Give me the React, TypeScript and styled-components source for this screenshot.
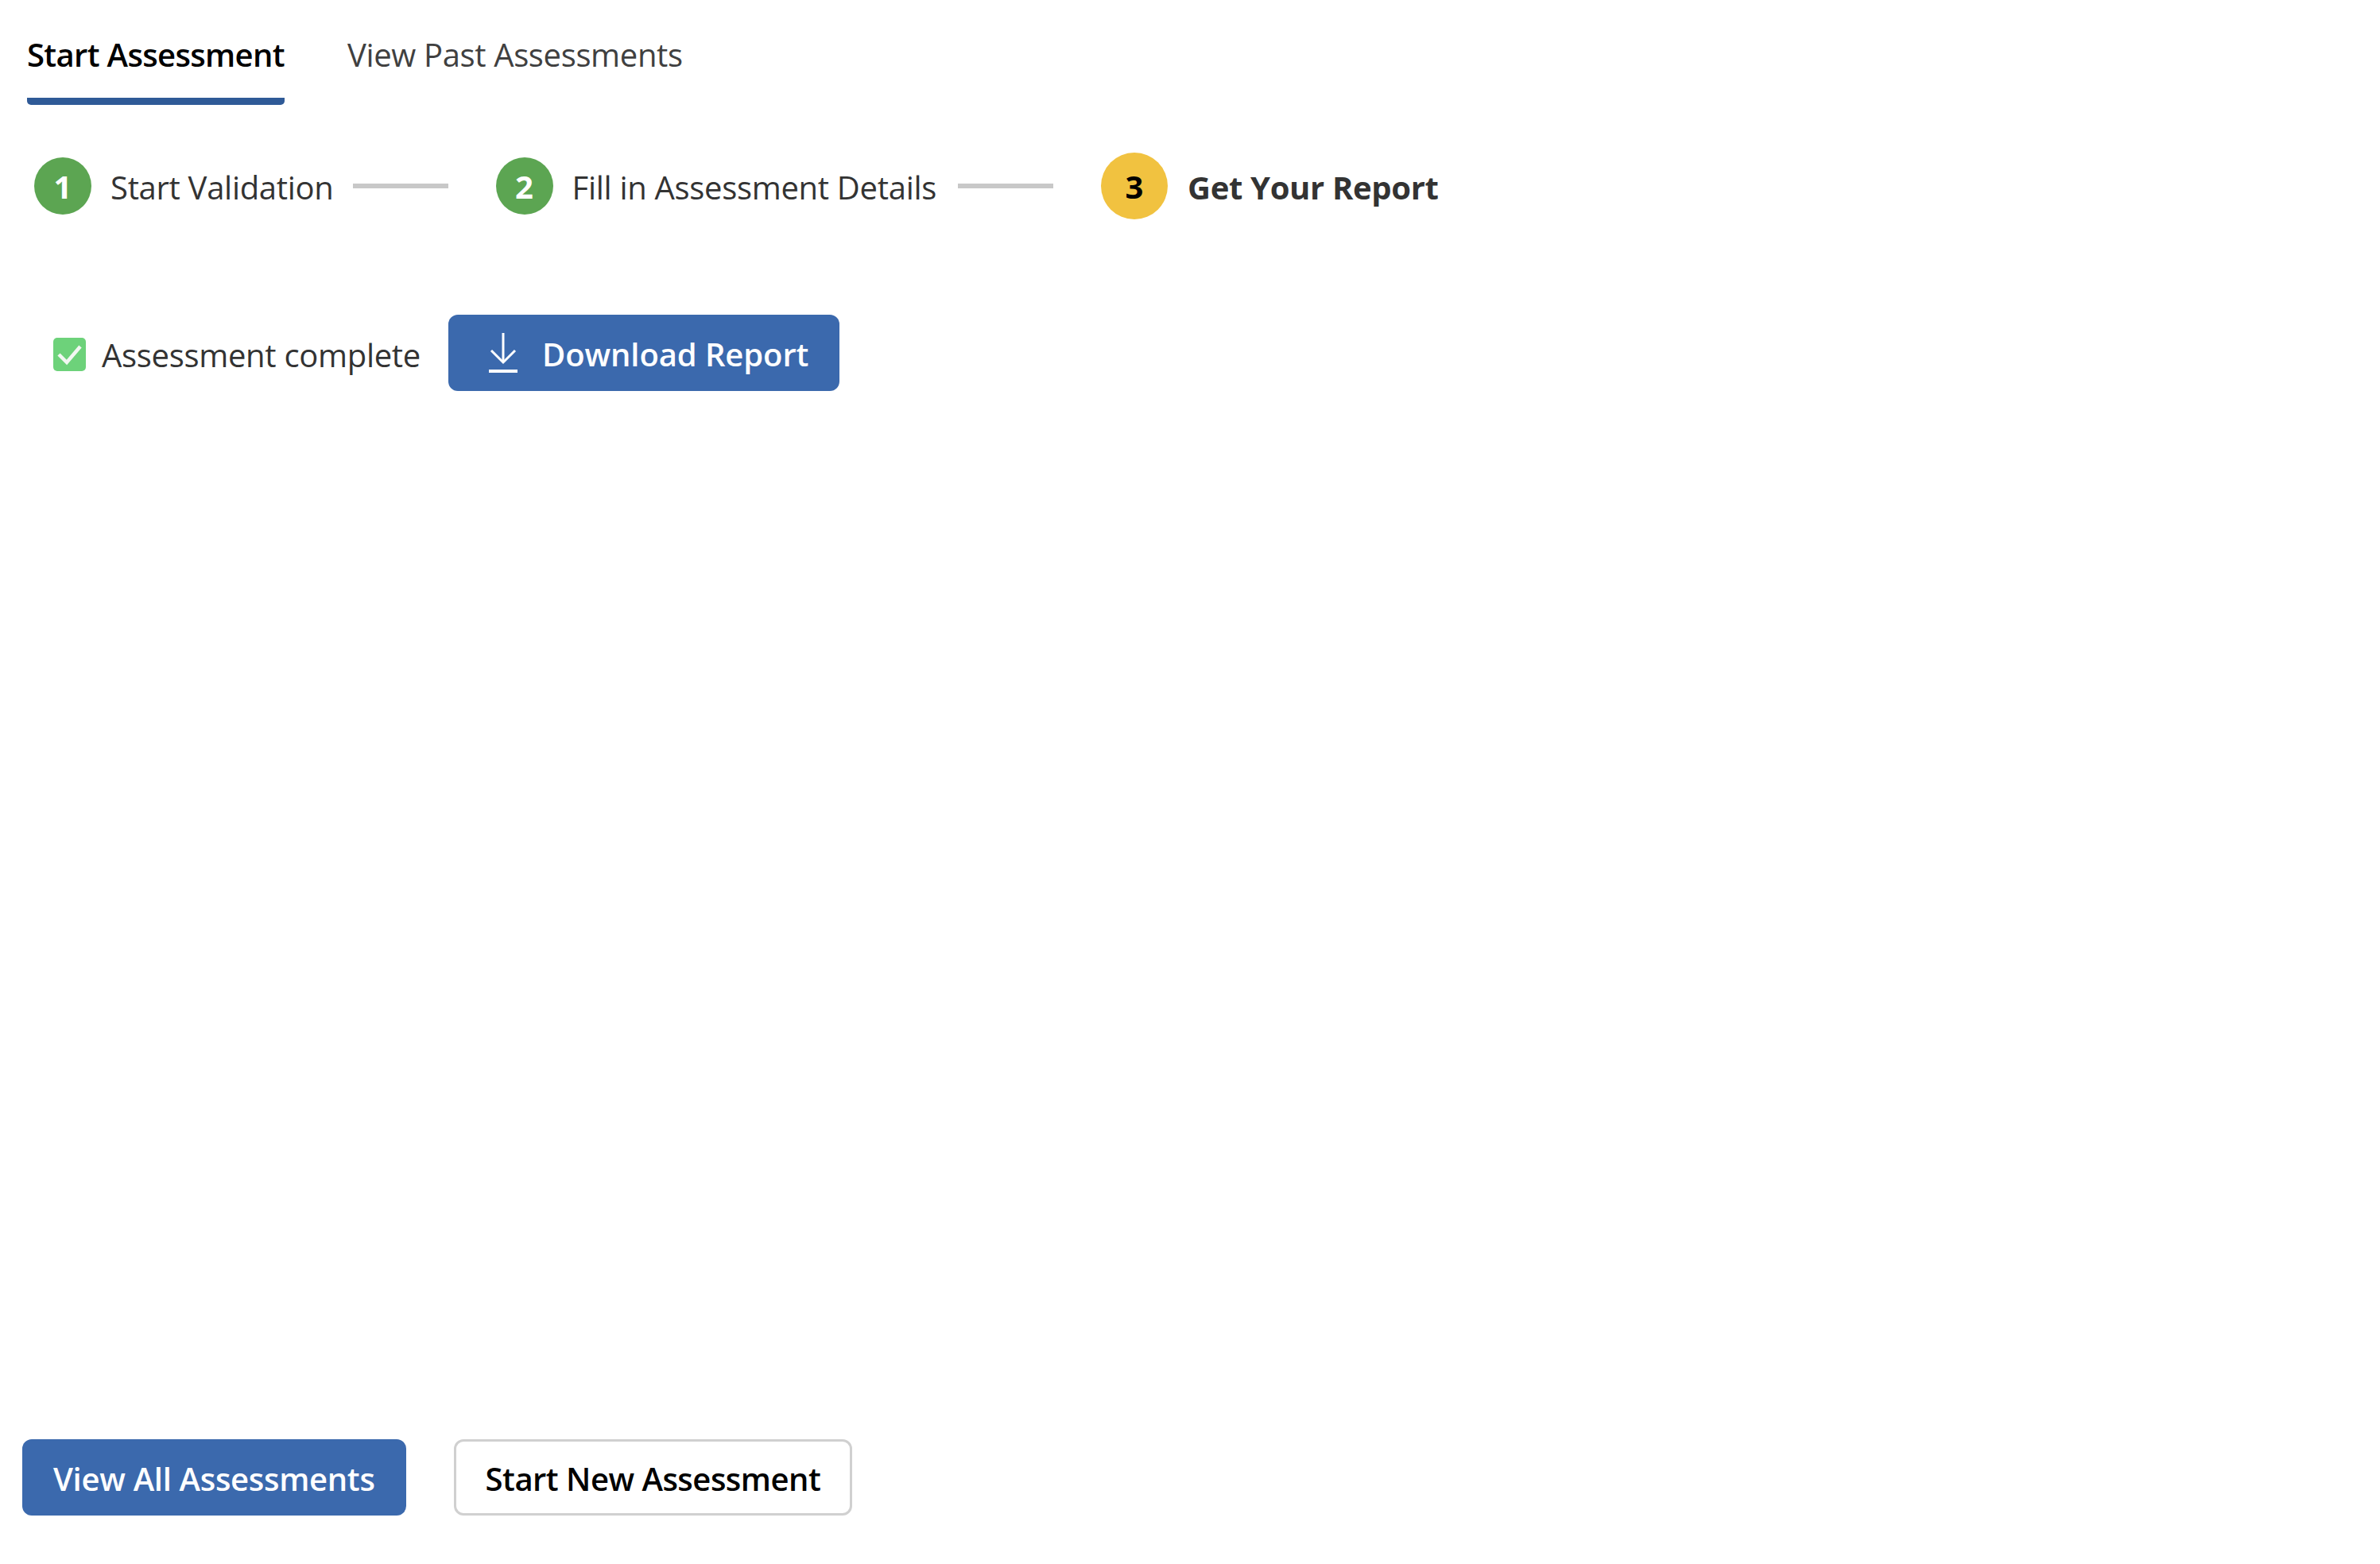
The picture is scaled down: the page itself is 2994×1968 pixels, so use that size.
import React from "react";
import styled, { createGlobalStyle } from "styled-components";

const Global = createGlobalStyle`
  html, body { margin: 0; padding: 0; background: #fff; }
  body { font-family: "Open Sans", "Noto Sans", sans-serif; }
`;

const Page = styled.div`
  display: flex;
  flex-direction: column;
  height: 1968px;
  box-sizing: border-box;
  padding: 0 0 61px 0;
`;

const Tabs = styled.div`
  display: flex;
  gap: 79px;
  padding-left: 34px;
  height: 132px;
`;

const Tab = styled.div<{ $active?: boolean }>`
  box-sizing: border-box;
  height: 132px;
  padding-top: 42px;
  font-size: 40px;
  line-height: 54px;
  font-weight: ${(p) => (p.$active ? 600 : 400)};
  letter-spacing: ${(p) => (p.$active ? "-0.65px" : "-0.35px")};
  color: ${(p) => (p.$active ? "#000" : "#404040")};
  border-bottom: 9px solid ${(p) => (p.$active ? "#2f5a97" : "transparent")};
  border-radius: 5px;
`;

const Stepper = styled.div`
  display: flex;
  align-items: center;
  height: 84px;
  margin-top: 60px;
  padding-left: 43px;
`;

const Circle = styled.div<{ $current?: boolean }>`
  width: ${(p) => (p.$current ? 84 : 72)}px;
  height: ${(p) => (p.$current ? 84 : 72)}px;
  border-radius: 50%;
  flex: none;
  display: flex;
  align-items: center;
  justify-content: center;
  font-size: 40px;
  font-weight: 700;
  color: ${(p) => (p.$current ? "#000" : "#fff")};
  background: ${(p) => (p.$current ? "#f1c240" : "#5ca552")};
`;

const StepLabel = styled.div<{ $current?: boolean }>`
  font-size: 40px;
  line-height: 54px;
  padding-top: 4px;
  margin-left: ${(p) => (p.$current ? 25 : 24)}px;
  letter-spacing: ${(p) => (p.$current ? "-0.33px" : "-0.3px")};
  font-weight: ${(p) => (p.$current ? 700 : 400)};
  color: #333;
  white-space: nowrap;
`;

const Connector = styled.div<{ $lead: number }>`
  width: 120px;
  height: 6px;
  flex: none;
  margin: 0 60px 0 ${(p) => p.$lead}px;
  background: #c8c8c8;
`;

const Status = styled.div`
  display: flex;
  align-items: center;
  margin-top: 120px;
  padding-left: 67px;
`;

const Check = styled.div`
  width: 41px;
  height: 42px;
  margin-top: 3px;
  border-radius: 5px;
  background: #6dd27a;
  display: flex;
  align-items: center;
  justify-content: center;
`;

const StatusText = styled.div`
  margin-left: 20px;
  padding-top: 5px;
  font-size: 40px;
  line-height: 54px;
  letter-spacing: -0.3px;
  color: #333;
`;

const Button = styled.button<{ $outline?: boolean }>`
  box-sizing: border-box;
  height: 96px;
  display: inline-flex;
  align-items: center;
  justify-content: center;
  padding: 3px ${(p) => (p.$outline ? 37 : 39)}px 0;
  border-radius: 12px;
  font-family: inherit;
  font-size: 40px;
  font-weight: 600;
  letter-spacing: ${(p) => (p.$outline ? "-0.5px" : "-0.3px")};
  color: ${(p) => (p.$outline ? "#000" : "#fff")};
  background: ${(p) => (p.$outline ? "#fff" : "#3b69ad")};
  border: ${(p) => (p.$outline ? "3px solid #d0d0d0" : "none")};
`;

const DownloadButton = styled(Button)`
  margin-left: 35px;
  padding: 3px 39px 0 50px;
  gap: 30px;
  letter-spacing: -0.1px;
`;

const DownloadIcon = styled.svg`
  margin-top: -3px;
`;

const Footer = styled.div`
  display: flex;
  gap: 60px;
  margin-top: auto;
  padding-left: 28px;
`;

export default function App() {
  return (
    <Page>
      <Global />
      <Tabs>
        <Tab $active>Start Assessment</Tab>
        <Tab>View Past Assessments</Tab>
      </Tabs>
      <Stepper>
        <Circle>1</Circle>
        <StepLabel>Start Validation</StepLabel>
        <Connector $lead={24} />
        <Circle>2</Circle>
        <StepLabel>Fill in Assessment Details</StepLabel>
        <Connector $lead={27} />
        <Circle $current>3</Circle>
        <StepLabel $current>Get Your Report</StepLabel>
      </Stepper>
      <Status>
        <Check>
          <svg width="32" height="30" viewBox="0 0 32 30" fill="none">
            <path d="M2 15 L12 25 L29 5" stroke="#f2f7f2" strokeWidth="4.5" />
          </svg>
        </Check>
        <StatusText>Assessment complete</StatusText>
        <DownloadButton>
          <DownloadIcon width="38" height="52" viewBox="0 0 38 52" fill="none" stroke="#fff">
            <path d="M19 1 V38" strokeWidth="3" />
            <path d="M4 23 L19 38 L34 23" strokeWidth="3" />
            <path d="M1 49 H37" strokeWidth="4" />
          </DownloadIcon>
          Download Report
        </DownloadButton>
      </Status>
      <Footer>
        <Button>View All Assessments</Button>
        <Button $outline>Start New Assessment</Button>
      </Footer>
    </Page>
  );
}
